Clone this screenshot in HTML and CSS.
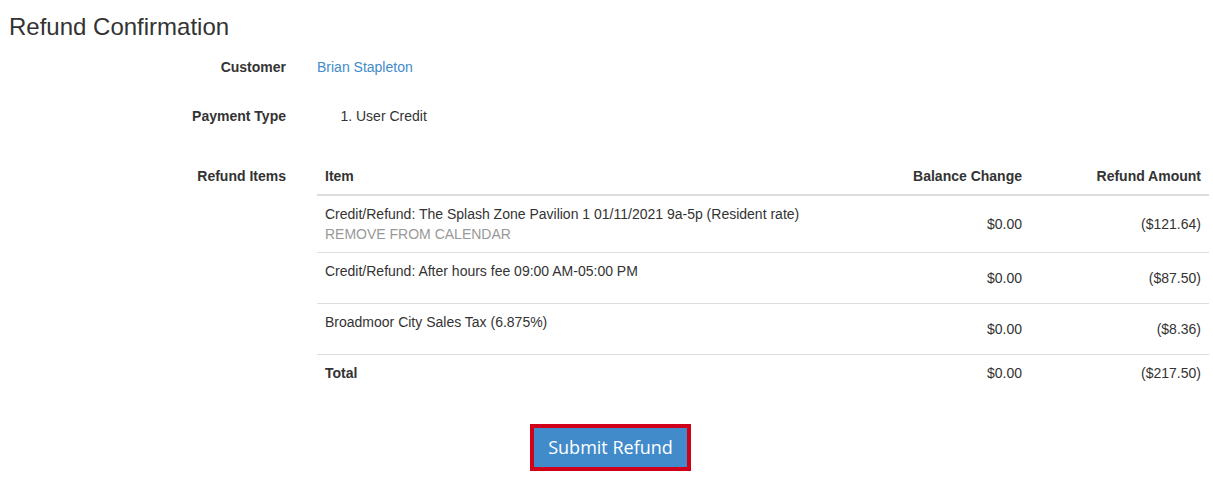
FILE: index.html
```html
<!DOCTYPE html>
<html>
<head>
<meta charset="utf-8">
<link rel="stylesheet" href="styles.css">
</head>
<body>
<h1 class="title">Refund Confirmation</h1>
<div class="form">
  <div class="label">Customer</div>
  <div class="value"><a class="link" href="#">Brian Stapleton</a></div>

  <div class="label">Payment Type</div>
  <div class="value payment"><ol class="plist"><li>User Credit</li></ol></div>

  <div class="label items-label">Refund Items</div>
  <div class="value-table">
    <table class="tbl">
      <colgroup>
        <col>
        <col class="c-bal">
        <col class="c-amt">
      </colgroup>
      <thead>
        <tr><th class="left">Item</th><th>Balance Change</th><th>Refund Amount</th></tr>
      </thead>
      <tbody>
        <tr>
          <td class="left">Credit/Refund: The Splash Zone Pavilion 1 01/11/2021 9a-5p (Resident rate)<div class="sub">REMOVE FROM CALENDAR</div></td>
          <td>$0.00</td><td>($121.64)</td>
        </tr>
        <tr>
          <td class="left">Credit/Refund: After hours fee 09:00 AM-05:00 PM<div class="spacer"></div></td>
          <td>$0.00</td><td>($87.50)</td>
        </tr>
        <tr>
          <td class="left">Broadmoor City Sales Tax (6.875%)<div class="spacer"></div></td>
          <td>$0.00</td><td>($8.36)</td>
        </tr>
        <tr>
          <td class="left total">Total</td>
          <td>$0.00</td><td>($217.50)</td>
        </tr>
      </tbody>
    </table>
  </div>
</div>
<div class="actions">
  <button class="submit" type="button">Submit Refund</button>
</div>
</body>
</html>
```

FILE: styles.css
```css
html, body {
  margin: 0;
  padding: 0;
  background: #fff;
}
body {
  font-family: "Liberation Sans", Arial, sans-serif;
  font-size: 14px;
  line-height: 20px;
  color: #333;
}
.title {
  margin: 0 0 0 9px;
  padding-top: 14px;
  font-size: 24px;
  line-height: 26px;
  font-weight: normal;
  color: #333;
}
.form {
  margin-top: 10px;
  display: grid;
  grid-template-columns: 286px 892px;
  column-gap: 31px;
  row-gap: 15px;
}
.label {
  text-align: right;
  font-weight: bold;
  padding-top: 7px;
  padding-bottom: 7px;
}
.items-label {
  padding-top: 8px;
}
.value {
  padding: 7px 0;
  min-height: 20px;
}
.payment {
  padding-bottom: 17px;
}
.plist {
  margin: 0;
  padding-left: 39px;
}
.link {
  color: #428bca;
  text-decoration: none;
}
.tbl {
  width: 100%;
  border-collapse: collapse;
  margin-bottom: 20px;
}
.c-bal { width: 170px; }
.c-amt { width: 179px; }
.tbl th {
  padding: 8px;
  text-align: right;
  font-weight: bold;
  border-bottom: 2px solid #ddd;
  vertical-align: bottom;
}
.tbl td {
  padding: 8px;
  text-align: right;
  border-top: 1px solid #ddd;
  vertical-align: middle;
}
.tbl .left {
  text-align: left;
}
.tbl td.left {
  vertical-align: top;
}
.sub {
  color: #999;
  text-transform: uppercase;
}
.spacer {
  height: 14px;
}
.total {
  font-weight: bold;
}
.actions {
  display: flex;
  justify-content: center;
  padding-left: 8px;
  margin-top: 13px;
}
.submit {
  font-family: "Open Sans", "Liberation Sans", sans-serif;
  font-size: 18px;
  line-height: 27px;
  padding: 6px 14px 6px 14px;
  color: #fff;
  background: #428bca;
  border: 4px solid #d0021b;
  border-radius: 0;
  cursor: pointer;
}
```
